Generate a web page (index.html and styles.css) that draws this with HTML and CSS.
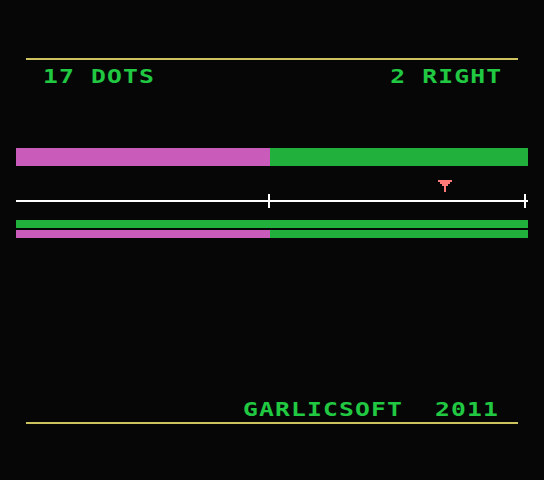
FILE: index.html
```html
<!DOCTYPE html>
<html>
<head>
<meta charset="utf-8">
<link rel="stylesheet" href="styles.css">
</head>
<body>
<div class="screen">
  <header class="header">
    <span class="txt left">17 DOTS</span>
    <span class="txt right">2 RIGHT</span>
  </header>
  <div class="bar big">
    <div class="fill magenta" style="width:254px"></div>
    <div class="fill green rest"></div>
  </div>
  <div class="track">
    <svg class="pointer" width="14" height="12" viewBox="0 0 14 12">
      <rect x="0" y="0" width="14" height="2" fill="#ff7978"/>
      <rect x="2" y="2" width="10" height="2" fill="#ff7978"/>
      <rect x="4" y="4" width="6" height="2" fill="#ff7978"/>
      <rect x="6" y="6" width="2" height="6" fill="#ff7978"/>
    </svg>
    <div class="line"></div>
    <div class="tick mid"></div>
    <div class="tick end"></div>
  </div>
  <div class="bars">
    <div class="bar thin">
      <div class="fill green rest"></div>
    </div>
    <div class="bar thin">
      <div class="fill magenta" style="width:254px"></div>
      <div class="fill green rest"></div>
    </div>
  </div>
  <footer class="footer">
    <span class="txt right">GARLICSOFT&nbsp;&nbsp;2011</span>
  </footer>
</div>
</body>
</html>
```
FILE: styles.css
```css
html, body {
  margin: 0;
  padding: 0;
  background: #060606;
}
.screen {
  width: 544px;
  height: 480px;
  padding-top: 58px;
  box-sizing: border-box;
  font-family: "DejaVu Sans Mono", monospace;
  font-weight: bold;
  font-size: 19px;
  line-height: 19px;
  color: #21c842;
}
.header {
  margin: 0 26px;
  border-top: 2px solid #ccc35e;
  padding: 7px 16px 0 17px;
  height: 81px;
  display: flex;
  justify-content: space-between;
  align-items: flex-start;
}
.txt {
  display: inline-block;
  white-space: pre;
  letter-spacing: 0.87px;
  transform: scaleX(1.3);
}
.txt.left { transform-origin: left center; }
.txt.right { transform-origin: right center; }
.bar {
  margin: 0 16px;
  display: flex;
}
.bar.big { height: 18px; }
.bar.thin { height: 8px; }
.fill { height: 100%; }
.fill.rest { flex: 1; }
.magenta { background: #c95bba; }
.green { background: #21b03b; }
.track {
  position: relative;
  margin: 14px 16px 0;
  height: 28px;
}
.pointer {
  position: absolute;
  left: 422px;
  top: 0;
  display: block;
}
.line {
  position: absolute;
  left: 0;
  right: 0;
  top: 20px;
  height: 2px;
  background: #ffffff;
}
.tick {
  position: absolute;
  top: 14px;
  width: 2px;
  height: 14px;
  background: #ffffff;
}
.tick.mid { left: 252px; }
.tick.end { left: 508px; }
.bars {
  margin-top: 12px;
  display: flex;
  flex-direction: column;
  gap: 2px;
}
.footer {
  margin: 162px 26px 0;
  padding: 0 19px 3px 0;
  border-bottom: 2px solid #ccc35e;
  text-align: right;
}
```
